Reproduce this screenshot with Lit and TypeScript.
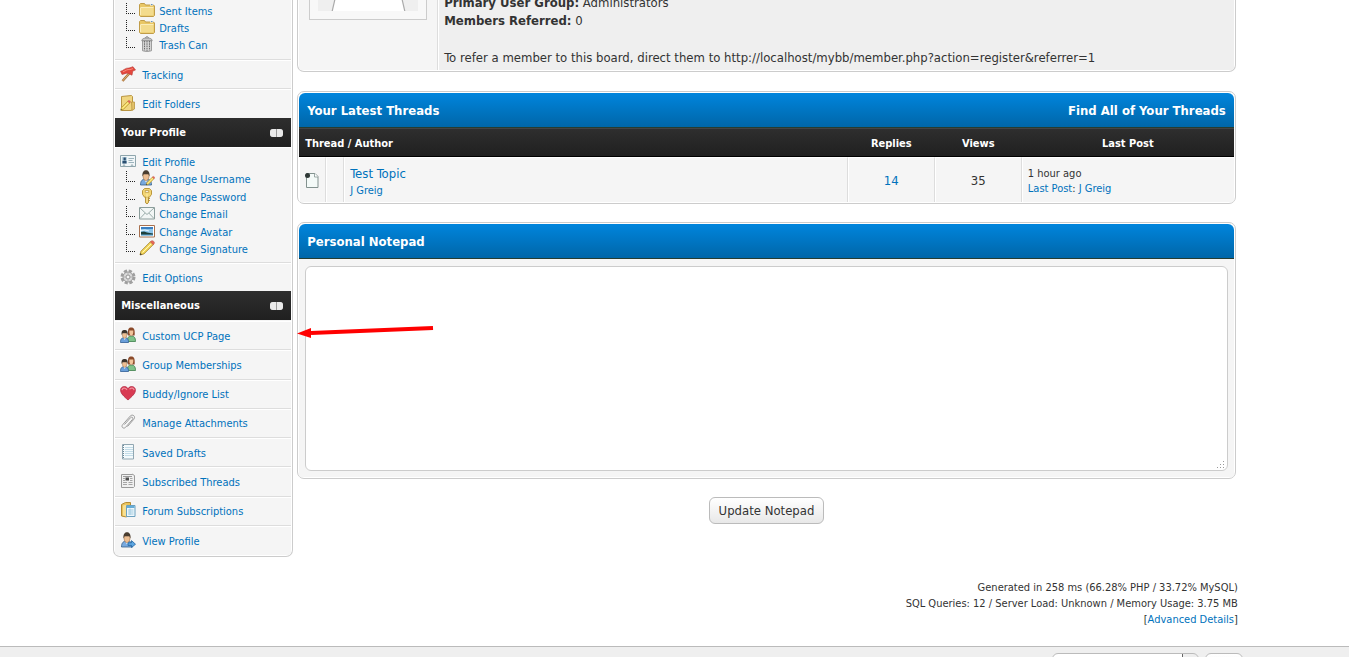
import { LitElement, html, css, svg, nothing, SVGTemplateResult } from "lit";
import { customElement, property } from "lit/decorators.js";

const person = (x: number, hair: string, shirt: string) => svg`
  <path d="M${x - 5.5} 15c0-4 1.500-6 5.500-6s5.500 2 5.500 6z" fill=${shirt} stroke="#35608a" stroke-width=".8"/>
  <path d="M${x - 1.500} 9.500l1.500 3 1.500-3z" fill="#fff"/>
  <path d="M${x - 3} 4.500c0 4 1 6 3 6s3-2 3-6z" fill="#edbe92" stroke="#9a6a40" stroke-width=".6"/>
  <path d="M${x - 3.500} 6.500C${x - 4} 2 ${x - 2} .3 ${x} .3s4 1.700 3.500 6.200l-1.200-2.500h-4.600z" fill=${hair}/>`;

const pencil = svg`
  <path d="M1 15l1-3.800L11.500 1.700l2.800 2.800L4.800 14z" fill="#f5d95c" stroke="#9b7a20" stroke-width=".8"/>
  <path d="M3.500 12.500l9-9" stroke="#fff6b8" stroke-width="1"/>
  <path d="M11.300 1.900l1-1c1.500-1 4 1.300 2.800 2.900l-.9.9z" fill="#e8695a" stroke="#b34a3c" stroke-width=".5"/>
  <path d="M1 15l.5-1.900 1.400 1.400z" fill="#333"/>`;

const group = svg`
  <path d="M7.500 14.500c0-4 .8-5.500 3.700-5.500s4.300 1.500 4.300 5.500z" fill="#7fc28a" stroke="#3d7f4b" stroke-width=".8"/>
  <path d="M8 8.500C7.500 2 8.800.5 11.200.5s4 1.500 3.400 8z" fill="#8b4a2a"/>
  <path d="M9.300 3.500h4c.2 3.500-.6 5-2 5s-2.200-1.500-2-5z" fill="#f1c59c"/>
  <path d="M.5 15.500c0-3.600 1-4.700 4-4.700s4 1.100 4 4.700z" fill="#6a9fda" stroke="#2e5e96" stroke-width=".8"/>
  <path d="M3.700 11l1 2 1-2z" fill="#fff"/>
  <path d="M2.300 6.500h4.600c0 3.300-.9 4.800-2.300 4.800S2.300 9.800 2.300 6.500z" fill="#edbe92" stroke="#9a6a40" stroke-width=".5"/>
  <path d="M1.700 8C1 4.300 2.500 3 4.600 3s3.600 1.300 2.900 5l-1-2H2.700z" fill="#3c342c"/>`;

const icons: Record<string, SVGTemplateResult> = {
  folder: svg`
    <path d="M.5 13.500v-11l1-1h4l1 1.500h8l1 1v9.500l-1 1h-13z" fill="#e9c765" stroke="#c09c48"/>
    <path d="M1.500 5.500h13v8h-13z" fill="#f3db8c"/>
    <path d="M1.500 5.500h13M1.500 6v7" stroke="#fbedb9" fill="none"/>
    <path d="M11 3h3" stroke="#fff"/><path d="M12 2.500h1.500" stroke="#5d93c8"/>`,
  trash: svg`
    <path d="M3.500 4.500h9v10.200c-2 1-7 1-9 0z" fill="#d4d4d4" stroke="#8a8a8a" stroke-width=".8"/>
    <path d="M5.500 5v9.500M8 5v10M10.500 5v9.500" stroke="#6b6b6b" stroke-width="1" stroke-dasharray="1.500 .8" fill="none"/>
    <path d="M2.800 4.800c0-2 2-2.800 5.200-2.800s5.200.8 5.200 2.800z" fill="#c8c8c8" stroke="#808080" stroke-width=".8"/>
    <path d="M6.500 2c0-1.700 3-1.700 3 0" stroke="#888" fill="none"/>`,
  flag: svg`
    <path d="M2.500 15L10 6.500" stroke="#a87038" stroke-width="2.400"/>
    <path d="M2.500 15L10 6.500" stroke="#deb074" stroke-width="1"/>
    <path d="M.5 5.200C3 5 5.500 1.500 9 2l4-1.300L15.500 4l-2.700 1L12 9.200 8.500 7.500C6 6.500 3.800 8.500 2 8.500z" fill="#e4473d" stroke="#b8403a" stroke-width=".6"/>
    <path d="M3 5.800C6 4.800 7 3 10 3.600l3-1" stroke="#f78c7c" fill="none"/>`,
  editFolder: svg`
    <path d="M1.500 1.500l10-1 1 1V14l-1 1.500h-10z" fill="#f0d681" stroke="#b99542"/>
    <path d="M11.500 7l3 0v7l-2.500 1.500z" fill="#e3c26a" stroke="#b99542" stroke-width=".8"/>
    <g transform="translate(0 5) scale(.68)">${pencil}</g>`,
  card: svg`
    <path d="M.5 2.500h15v11H.5z" fill="#f1f6f8" stroke="#8ea5ac"/>
    <path d="M2 4h5v6.500H2z" fill="#b9d3df"/>
    <path d="M3.500 4.500h2.300v3H3.500zM2.500 8h4v2.500h-4z" fill="#294d70"/>
    <path d="M8.500 5.500H14M8.500 7.500h4M8.500 9.500H14" stroke="#9db4bd"/>
    <path d="M3 13l1-1.500L5 13M11 13l1-1.500 1 1.500" fill="#fff" stroke="#74909a" stroke-width=".7"/>`,
  editUser: svg`${person(7, "#4a3d30", "#78a9de")}<g transform="translate(6.500 6) scale(.6)">${pencil}</g>`,
  key: svg`
    <path d="M6.500 9h3v5.500L8 16l-1.500-1.300z" fill="#e9c256" stroke="#a88328" stroke-width=".8"/>
    <path d="M9.500 10.500h1.300M9.500 12.500h1.300" stroke="#a88328"/>
    <path d="M5.500.5h5l2 2.200v3.600l-2 2.900h-5l-2-2.900V2.700z" fill="#f3d675" stroke="#b58e30" stroke-width=".9"/>
    <path d="M6.300 2.500h3.400v1.800H6.300z" fill="#fff" stroke="#b58e30" stroke-width=".7"/>
    <path d="M8 5.500v9" stroke="#fff0ae"/>`,
  mail: svg`
    <path d="M.5 2.500h15v11.500H.5z" fill="#f2f6f5" stroke="#8b9d9b"/>
    <path d="M1 3l7 6.500L15 3M1 13.500l5.200-5.500M15 13.500L9.800 8" stroke="#9badab" fill="none"/>`,
  image: svg`
    <path d="M.5 2.500h15v11.500H.5z" fill="#fff" stroke="#a8704e"/>
    <path d="M2 4h12v8.500H2z" fill="#8cc4ea"/>
    <path d="M2 4h12v2H2z" fill="#3b7fc0"/>
    <path d="M2 9l3-.5 3 1 3 .5 3 .5v1.500H2z" fill="#1f3f3b"/>
    <path d="M2 7.500l4-.5 4 1" stroke="#e6f4ff" fill="none"/><path d="M2 11.500h12v1H2z" fill="#5aa3d0"/>`,
  pencil,
  gear: svg`
    <circle cx="8" cy="8" r="6" fill="none" stroke="#a0a0a0" stroke-width="3" stroke-dasharray="3.100 1.610"/>
    <circle cx="8" cy="8" r="5" fill="#d9d9d9" stroke="#999" stroke-width="1"/>
    <circle cx="8" cy="8" r="2" fill="#f5f5f5" stroke="#8c8c8c" stroke-width=".9"/>
    <path d="M8 3.500v2.300M8 10.200v2.300M3.500 8h2.300M10.200 8h2.300" stroke="#aaa" stroke-width=".8"/>`,
  group,
  heart: svg`
    <path d="M8 15C4 11.500.6 8.500.6 5.200.6 1.300 5.500.2 8 3.500c2.500-3.300 7.400-2.200 7.400 1.700C15.400 8.500 12 11.500 8 15z" fill="#d83a52" stroke="#b12b44" stroke-width=".8"/>
    <path d="M2 5.200C2.400 2.800 5 2.500 7 4.700M9.500 4.200c2-1.900 4.300-1 4.600 1" stroke="#f0909c" stroke-width="1.300" fill="none"/>`,
  clip: svg`
    <path d="M4.500 10.500l6-6.800c1.500-1.400 3.200.2 2 1.700l-7 8c-2 1.900-4.700-.4-2.900-2.600l7.600-8.700c2.600-2.500 5.800.3 3.600 3.200l-6.300 7.200" fill="none" stroke="#9c9c9c" stroke-width="1"/>`,
  notebook: svg`
    <path d="M2.500.500h11v14.500h-11z" fill="#f4fafc" stroke="#91a7b2"/>
    <path d="M5 3.500h8M5 5.500h8M5 7.500h8M5 9.500h8M5 11.500h8" stroke="#c3dce8"/>
    <path d="M3.500 1v14" stroke="#6d8797" stroke-dasharray="1 1"/>`,
  news: svg`
    <path d="M1.500 1.500H12v-.5l2.500 1.500v11l-1 1h-12z" fill="#f0f0f0" stroke="#9a9a9a"/>
    <path d="M3 3.500h9" stroke="#999"/><path d="M5.500 4.500h3.500v3H5.500z" fill="#4b4b4b"/>
    <path d="M3 5.500h2M10 5.500h2.500M3 7.500h2M10 7.500h2.500M3 9.500h4M8.500 9.500h4M3 11.500h4M8.500 11.500h4" stroke="#a5a5a5"/>`,
  forumSub: svg`
    <path d="M1.500 2.500l4-2h5v3l-4 11.500-5-1z" fill="#e9c25b" stroke="#b58c33"/>
    <path d="M3 3.500l3.500-1v12L3 13.500z" fill="#f7df91"/>
    <path d="M6.500 3.500h8.500v11H6.500z" fill="#eef7fc" stroke="#6ba0bf"/>
    <path d="M7 4h7.500v2H7z" fill="#65acd7"/><path d="M8 8h5.500M8 10h5.500M8 12h5.500M10 6.500V13" stroke="#a3cce0"/>`,
  viewUser: svg`${person(7, "#4a3d30", "#78a9de")}
    <path d="M8 10.800h3.500V8.600l4 3.600-4 3.400v-2.200H8z" fill="#5ca6e2" stroke="#23659f" stroke-width=".8"/>`,
  thread: svg`
    <path d="M1.500 1.500h8.500l3 3v11h-11.500z" fill="#f4faf8" stroke="#83928f"/>
    <path d="M9.500 1.500v3.500H13" fill="#fff" stroke="#83928f" stroke-width=".8"/>
    <circle cx="2.500" cy="3.500" r="2.500" fill="#2f3836"/>`,
};

@customElement("ucp-icon")
class UcpIcon extends LitElement {
  static styles = css`
    :host { display: block; flex: none; width: 16px; height: 16px; }
    .icon { display: block; width: 100%; height: 100%; }
  `;
  @property() name = "folder";
  render() {
    return html`<svg class="icon" viewBox="0 0 16 16" fill="none" aria-hidden="true">${icons[this.name] ?? nothing}</svg>`;
  }
}

type Item = [icon: string, label: string];

@customElement("app-root")
class AppRoot extends LitElement {
  static styles = css`
    :host {
      display: flex;
      flex-direction: column;
      height: 100vh;
      overflow: hidden;
      background: #fff;
      color: #333;
      font: 13px/18px "DejaVu Sans Condensed", Tahoma, Verdana, sans-serif;
    }
    * { box-sizing: border-box; }
    a { color: #0072bc; text-decoration: none; }
    ul { list-style: none; margin: 0; padding: 0; }
    h2, h3, p { margin: 0; }
    .small { font-size: 11px; line-height: 15px; }
    .wrapper {
      width: 85%;
      margin: 0 auto;
      padding: 0 10px;
      flex: none;
    }
    .columns {
      display: grid;
      grid-template-columns: 180px minmax(0, 1fr);
      column-gap: 4px;
      align-items: start;
      padding: 0 2px;
    }
    .panel {
      border: 1px solid #ccc;
      border-radius: 7px;
      padding: 1px;
      background: #fff;
      overflow: hidden;
    }
    .panel.cut { border-top: 0; border-radius: 0 0 7px 7px; padding-top: 0; }

    .side { font-size: 11px; line-height: 16px; }
    .block { background: #f5f5f5; }
    .folders, .profile {
      display: grid;
      grid-auto-rows: minmax(0, 1fr);
      border-bottom: 1px solid #ddd;
    }
    .folders { height: 60px; padding: 2px 0 5px; }
    .profile { height: 115px; padding: 5px 0 4px; margin-top: 1px; }
    .link {
      display: flex;
      align-items: center;
      gap: 6px;
      padding-left: 5px;
    }
    .link ucp-icon { margin-bottom: 2px; }
    .label { padding-top: 2px; }
    .link.sub { gap: 4px; padding-left: 11px; }
    .branch {
      width: 9px;
      height: 11px;
      margin-bottom: 5px;
      border-left: 1px dotted #222;
      border-bottom: 1px dotted #222;
    }
    .rows { display: grid; grid-auto-rows: minmax(0, 1fr); }
    .rows li {
      display: flex;
      align-items: center;
      border-top: 1px solid #fff;
      border-bottom: 1px solid #ddd;
    }
    .rows li:last-child { border-bottom: 0; }
    .rows.top { height: 58px; }
    .rows.one { height: 28px; }
    .rows.misc { height: 235px; padding-top: 1px; }
    .sidehead {
      display: flex;
      justify-content: space-between;
      align-items: center;
      height: 29px;
      padding: 1px 8px 0 6px;
      background: linear-gradient(#2e2e2e, #202020);
      color: #fff;
      font-size: 11px;
      line-height: 16px;
    }
    .toggle {
      display: flex;
      gap: 1px;
      width: 13px;
      height: 8px;
      padding: 0;
      border: 0;
      border-radius: 3px;
      background: #999;
    }
    .half { flex: 1; height: 8px; background: #e9e9e9; border-radius: 3px 0 0 3px; }
    .half + .half { border-radius: 0 3px 3px 0; }

    .main { display: flex; flex-direction: column; }
    .summary {
      display: grid;
      grid-template-columns: 139px minmax(0, 1fr);
      grid-template-rows: 100%;
      height: 70px;
      overflow: hidden;
    }
    .avatarcell {
      padding: 0 10px;
      background: #f5f5f5;
      border-right: 1px solid #ddd;
    }
    .avatar {
      display: block;
      width: 118px;
      height: 20px;
      padding: 0 8px 8px;
      border: 1px solid #ccc;
      border-top: 0;
      background: #f8f8f8;
    }
    .figure { display: block; width: 100px; height: 11px; }
    .facts {
      display: flex;
      flex-direction: column;
      justify-content: flex-end;
      margin-left: 1px;
      padding: 0 5px 3px;
      background: #efefef;
    }
    .facts p { flex: none; }
    .facts .refer { margin-top: 19px; }

    .threads { margin-top: 19px; }
    .notes { margin-top: 18px; }
    .thead {
      display: flex;
      justify-content: space-between;
      align-items: center;
      height: 35px;
      padding: 2px 8px 0;
      border-radius: 6px 6px 0 0;
      border-bottom: 1px solid #263c30;
      background: linear-gradient(#0085dd, #0066a8);
      color: #fff;
      font-size: 13px;
      line-height: 18px;
      font-weight: bold;
    }
    .thead h2 { font-size: 13px; }
    .thead a { color: #fff; }
    .table {
      width: 100%;
      table-layout: fixed;
      border-collapse: separate;
      border-spacing: 0;
    }
    .table th {
      height: 29px;
      padding: 2px 6px 0;
      border-top: 1px solid #444;
      border-bottom: 1px solid #000;
      background: linear-gradient(#2e2e2e, #202020);
      color: #fff;
      font-size: 11px;
      line-height: 16px;
      text-align: center;
    }
    .table th.start { text-align: left; }
    .table td {
      height: 45px;
      padding: 2px 5px 0;
      border: 1px solid #fff;
      border-right-color: #ddd;
      border-bottom: 0;
      background: #f5f5f5;
      text-align: center;
    }
    .table td.start { text-align: left; }
    .table td.icon { padding-top: 0; }
    .table td.last { text-align: left; border-right: 0; }
    .c-icon { width: 27px; }
    .c-mark { width: 18px; }
    .c-num { width: 87px; }
    .c-last { width: 212px; }
    .stack { display: flex; flex-direction: column; align-items: flex-start; }

    .notebody { padding: 7px 6px 6px; background: #f5f5f5; }
    .text {
      display: block;
      width: 100%;
      height: 205px;
      padding: 6px;
      border: 1px solid #ccc;
      border-radius: 6px;
      background: #fff;
      font: inherit;
      color: #333;
      resize: vertical;
      outline: 0;
    }
    .text::-webkit-resizer {
      background:
        linear-gradient(#999, #999) 11px 6px / 1px 1px,
        linear-gradient(#999, #999) 8px 9px / 1px 1px,
        linear-gradient(#999, #999) 11px 9px / 1px 1px,
        linear-gradient(#999, #999) 5px 12px / 1px 1px,
        linear-gradient(#999, #999) 8px 12px / 1px 1px,
        linear-gradient(#999, #999) 11px 12px / 1px 1px;
      background-repeat: no-repeat;
    }
    .actions { display: flex; justify-content: center; padding-top: 18px; }
    .button {
      height: 27px;
      padding: 1px 9px 0;
      border: 1px solid #bbb;
      border-radius: 6px;
      background: linear-gradient(#fff, #e8e8e8);
      color: #333;
      font: inherit;
    }
    .debug { padding-top: 23px; text-align: right; line-height: 16px; }
    .footer {
      flex: 1 0 11px;
      margin-top: 18px;
      border-top: 1px solid #bbb;
      background: #efefef;
      overflow: hidden;
    }
    .tools {
      display: flex;
      justify-content: flex-end;
      gap: 6px;
      width: 85%;
      margin: 0 auto;
      padding: 6px 5px 0;
    }
    .select {
      appearance: none;
      width: 147px;
      height: 24px;
      border: 1px solid #bbb;
      border-radius: 6px;
      background: linear-gradient(90deg, #666 1px, #eee 1px) right top / 16px 24px no-repeat #fff;
      font: inherit;
    }
    .go { width: 38px; }
    .arrow {
      position: absolute;
      left: 297px;
      top: 320px;
      width: 138px;
      height: 20px;
      pointer-events: none;
    }
  `;

  private link([icon, label]: Item) {
    return html`<a class="link" href="#"><ucp-icon name=${icon}></ucp-icon><span class="label">${label}</span></a>`;
  }

  private sub([icon, label]: Item) {
    return html`<a class="link sub" href="#"><span class="branch"></span><ucp-icon name=${icon}></ucp-icon><span class="label">${label}</span></a>`;
  }

  private rows(kind: string, items: Item[]) {
    return html`<ul class="block rows ${kind}">${items.map((i) => html`<li>${this.link(i)}</li>`)}</ul>`;
  }

  private heading(title: string) {
    return html`<h3 class="sidehead">
      <span>${title}</span>
      <button class="toggle" aria-label="Collapse ${title}"><span class="half"></span><span class="half"></span></button>
    </h3>`;
  }

  render() {
    return html`
      <div class="wrapper">
        <div class="columns">
          <nav class="side panel cut">
            <div class="block folders">
              ${this.sub(["folder", "Sent Items"])}
              ${this.sub(["folder", "Drafts"])}
              ${this.sub(["trash", "Trash Can"])}
            </div>
            ${this.rows("top", [["flag", "Tracking"], ["editFolder", "Edit Folders"]])}
            ${this.heading("Your Profile")}
            <div class="block profile">
              ${this.link(["card", "Edit Profile"])}
              ${this.sub(["editUser", "Change Username"])}
              ${this.sub(["key", "Change Password"])}
              ${this.sub(["mail", "Change Email"])}
              ${this.sub(["image", "Change Avatar"])}
              ${this.sub(["pencil", "Change Signature"])}
            </div>
            ${this.rows("one", [["gear", "Edit Options"]])}
            ${this.heading("Miscellaneous")}
            ${this.rows("misc", [
              ["group", "Custom UCP Page"],
              ["group", "Group Memberships"],
              ["heart", "Buddy/Ignore List"],
              ["clip", "Manage Attachments"],
              ["notebook", "Saved Drafts"],
              ["news", "Subscribed Threads"],
              ["forumSub", "Forum Subscriptions"],
              ["viewUser", "View Profile"],
            ])}
          </nav>

          <main class="main">
            <section class="panel cut">
              <div class="summary">
                <div class="avatarcell">
                  <div class="avatar">
                    <svg class="figure" viewBox="0 0 100 11" aria-hidden="true">
                      <rect width="100" height="11" fill="#efefef"/>
                      <path d="M17 -1L14 12H87L84 -1z" fill="#fff" stroke="#aaa" stroke-width="1.200"/>
                    </svg>
                  </div>
                </div>
                <div class="facts">
                  <p><b>Primary User Group:</b> Administrators</p>
                  <p><b>Members Referred:</b> 0</p>
                  <p class="refer">To refer a member to this board, direct them to http://localhost/mybb/member.php?action=register&amp;referrer=1</p>
                </div>
              </div>
            </section>

            <section class="panel threads">
              <div class="thead"><h2>Your Latest Threads</h2><a href="#">Find All of Your Threads</a></div>
              <table class="table">
                <colgroup>
                  <col class="c-icon"><col class="c-mark"><col><col class="c-num"><col class="c-num"><col class="c-last">
                </colgroup>
                <thead>
                  <tr><th class="start" colspan="3">Thread / Author</th><th>Replies</th><th>Views</th><th>Last Post</th></tr>
                </thead>
                <tbody>
                  <tr>
                    <td class="start icon"><ucp-icon name="thread"></ucp-icon></td>
                    <td></td>
                    <td class="start">
                      <div class="stack"><a href="#">Test Topic</a><a class="small" href="#">J Greig</a></div>
                    </td>
                    <td><a href="#">14</a></td>
                    <td>35</td>
                    <td class="last small">1 hour ago<br><a href="#">Last Post</a>: <a href="#">J Greig</a></td>
                  </tr>
                </tbody>
              </table>
            </section>

            <section class="panel notes">
              <div class="thead"><h2 id="notepad">Personal Notepad</h2></div>
              <div class="notebody"><textarea class="text" aria-labelledby="notepad"></textarea></div>
            </section>
            <div class="actions"><button class="button">Update Notepad</button></div>
          </main>
        </div>
        <div class="debug small">
          Generated in 258 ms (66.28% PHP / 33.72% MySQL)<br>
          SQL Queries: 12 / Server Load: Unknown / Memory Usage: 3.75 MB<br>
          [<a href="#">Advanced Details</a>]
        </div>
      </div>
      <footer class="footer">
        <div class="tools">
          <select class="select" aria-label="Language"></select>
          <button class="button go" aria-label="Go"></button>
        </div>
      </footer>
      <svg class="arrow" viewBox="0 0 138 20" aria-hidden="true">
        <path d="M14 13L136 8" stroke="#f00" stroke-width="4"/>
        <path d="M0 13.500L14 8V18z" fill="#f00"/>
      </svg>
    `;
  }
}
